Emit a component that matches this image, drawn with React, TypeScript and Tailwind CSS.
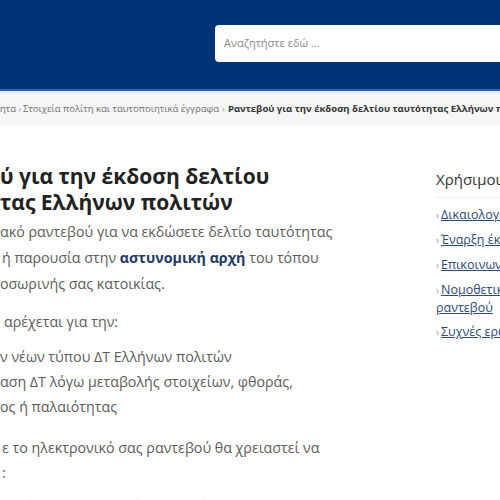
import React from "react";

export default function App() {
  const font = { fontFamily: '"Open Sans", "Noto Sans", sans-serif' };
  return (
    <div className="w-[500px] h-[500px] overflow-hidden bg-white" style={font}>
      <header className="h-[89px] bg-[#003476] pt-[25px]">
        <div className="ml-[215px] h-[37px] w-[320px] rounded-[4px] bg-white flex items-center pl-[9px]">
          <span className="text-[11px] text-[#8a8a8a]">Αναζητήστε εδώ ...</span>
        </div>
      </header>
      <div className="h-[2px] bg-[#2466b0]" />
      <div className="h-[2px] bg-[#dff1f8]" />
      <nav className="h-[32px] bg-[#f5f6f8] flex items-center whitespace-nowrap text-[9.5px] text-[#707070]">
        <span>ητα</span>
        <span className="mx-[2px] text-[#999]">›</span>
        <span>Στοιχεία πολίτη και ταυτοποιητικά έγγραφα</span>
        <span className="mx-[3px] text-[#999]">›</span>
        <span className="font-bold text-[#333]">Ραντεβού για την έκδοση δελτίου ταυτότητας Ελλήνων πολιτών</span>
      </nav>
      <div className="flex pt-[38px]">
        <main className="w-[436px] shrink-0 whitespace-nowrap">
          <h1 className="text-[21px] leading-[26px] font-bold text-[#222]">
            ύ για την έκδοση δελτίου
            <br />
            τας Ελλήνων πολιτών
          </h1>
          <p className="mt-[4px] text-[14.25px] leading-[26px] text-[#5c5c5c]">
            ακό ραντεβού για να εκδώσετε δελτίο ταυτότητας
            <br />
            <span className="pl-[2px]">ή παρουσία στην </span>
            <span className="font-bold text-[#1f3a64]">αστυνομική αρχή</span> του τόπου
            <br />
            οσωρινής σας κατοικίας.
          </p>
          <p className="mt-[12px] pl-[4px] text-[14.25px] leading-[26px] text-[#5c5c5c]">
            αρέχεται για την:
          </p>
          <ul className="mt-[9px] text-[14.25px] leading-[25px] text-[#5c5c5c]">
            <li>ν νέων τύπου ΔΤ Ελλήνων πολιτών</li>
            <li>
              αση ΔΤ λόγω μεταβολής στοιχείων, φθοράς,
              <br />
              ος ή παλαιότητας
            </li>
          </ul>
          <p className="mt-[16px] pl-[2px] text-[14.25px] leading-[25px] text-[#5c5c5c]">
            ε το ηλεκτρονικό σας ραντεβού θα χρειαστεί να
            <br />
            :
          </p>
          <p className="mt-[8px] pl-[20px] text-[14.25px] leading-[25px] text-[#e4e8ee]">
            ρίσετε τον κωδικό ταυτοποίησης ΑΜΚΑ
          </p>
        </main>
        <aside className="shrink-0 w-[200px] pt-[6px] whitespace-nowrap">
          <h2 className="text-[15px] leading-[20px] text-[#333] pb-[8px] border-b border-[#eeeeee]">
            Χρήσιμοι σύνδεσμοι
          </h2>
          <ul className="mt-[4px] text-[12.5px] leading-[17px]">
            <li className="py-[3.5px]">
              <span className="text-[#999] text-[10px] mr-[2px]">›</span>
              <span className="text-[#2c4a7c] underline">Δικαιολογητικά</span>
            </li>
            <li className="py-[3.5px]">
              <span className="text-[#999] text-[10px] mr-[2px]">›</span>
              <span className="text-[#2c4a7c] underline">Έναρξη έκδοσης</span>
            </li>
            <li className="py-[3.5px]">
              <span className="text-[#999] text-[10px] mr-[2px]">›</span>
              <span className="text-[#2c4a7c] underline">Επικοινωνία</span>
            </li>
            <li className="py-[3.5px]">
              <span className="text-[#999] text-[10px] mr-[2px]">›</span>
              <span className="text-[#2c4a7c] underline">Νομοθετικό πλαίσιο για τα</span>
              <br />
              <span className="text-[#2c4a7c] underline">ραντεβού</span>
            </li>
            <li className="py-[4px]">
              <span className="text-[#999] text-[10px] mr-[2px]">›</span>
              <span className="text-[#2c4a7c] underline">Συχνές ερωτήσεις</span>
            </li>
          </ul>
        </aside>
      </div>
    </div>
  );
}
